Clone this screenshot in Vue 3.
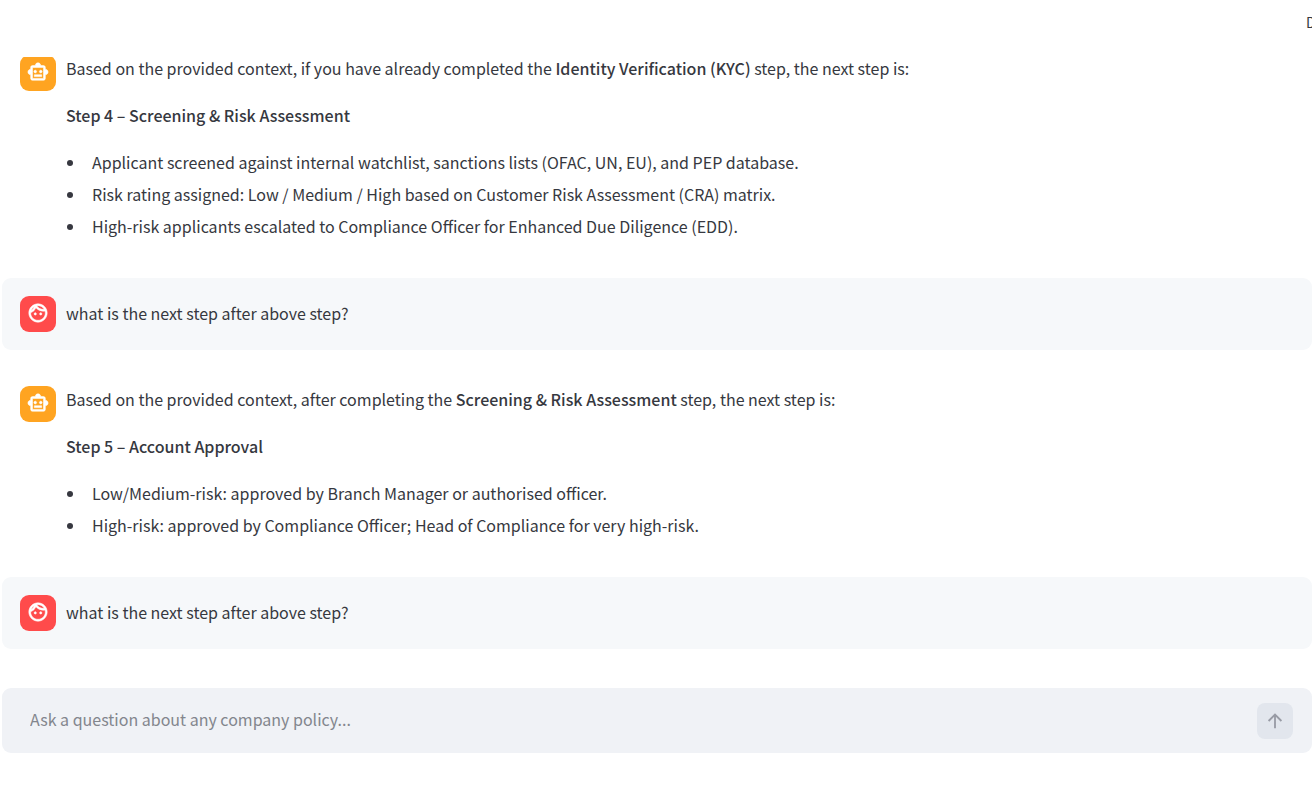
<script setup>
import { ref } from 'vue'

const question = ref('')

const messages = [
  {
    role: 'assistant',
    before: 'Based on the provided context, if you have already completed the ',
    strong: 'Identity Verification (KYC)',
    after: ' step, the next step is:',
    step: 'Step 4 – Screening & Risk Assessment',
    items: [
      'Applicant screened against internal watchlist, sanctions lists (OFAC, UN, EU), and PEP database.',
      'Risk rating assigned: Low / Medium / High based on Customer Risk Assessment (CRA) matrix.',
      'High-risk applicants escalated to Compliance Officer for Enhanced Due Diligence (EDD).',
    ],
  },
  { role: 'user', text: 'what is the next step after above step?' },
  {
    role: 'assistant',
    before: 'Based on the provided context, after completing the ',
    strong: 'Screening & Risk Assessment',
    after: ' step, the next step is:',
    step: 'Step 5 – Account Approval',
    items: [
      'Low/Medium-risk: approved by Branch Manager or authorised officer.',
      'High-risk: approved by Compliance Officer; Head of Compliance for very high-risk.',
    ],
  },
  { role: 'user', text: 'what is the next step after above step?' },
]
</script>

<template>
  <div class="app">
    <header class="toolbar">
      <button type="button" class="deploy">Deploy</button>
    </header>

    <main class="chat">
      <article v-for="(m, i) in messages" :key="i" class="message" :class="m.role">
        <div class="avatar">
          <svg v-if="m.role === 'assistant'" viewBox="0 0 24 24" aria-hidden="true">
            <path d="M20 9V7c0-1.1-.9-2-2-2h-3c0-1.66-1.34-3-3-3S9 3.34 9 5H6c-1.1 0-2 .9-2 2v2c-1.66 0-3 1.34-3 3s1.34 3 3 3v4c0 1.1.9 2 2 2h12c1.1 0 2-.9 2-2v-4c1.66 0 3-1.34 3-3s-1.34-3-3-3zm-2 10H6V7h12v12zm-9-6c-.83 0-1.5-.67-1.5-1.5S8.17 10 9 10s1.5.67 1.5 1.5S9.83 13 9 13zm7.5-1.5c0 .83-.67 1.5-1.5 1.5s-1.5-.67-1.5-1.5.67-1.5 1.5-1.5 1.5.67 1.5 1.5zM8 15h8v2H8v-2z" />
          </svg>
          <svg v-else viewBox="0 0 24 24" aria-hidden="true">
            <path d="M10.25 13c0 .69-.56 1.25-1.25 1.25S7.75 13.69 7.75 13s.56-1.25 1.25-1.25 1.25.56 1.25 1.25zM15 11.75c-.69 0-1.25.56-1.25 1.25s.56 1.25 1.25 1.25 1.25-.56 1.25-1.25-.56-1.25-1.25-1.25zm7 .25c0 5.52-4.48 10-10 10S2 17.52 2 12 6.48 2 12 2s10 4.48 10 10zM10.66 4.12C12.06 6.44 14.6 8 17.5 8c.46 0 .91-.05 1.34-.12C17.44 5.56 14.9 4 12 4c-.46 0-.91.05-1.34.12zM4.42 9.47a8.046 8.046 0 0 0 3.66-4.44 8.046 8.046 0 0 0-3.66 4.44zM20 12c0-.78-.12-1.53-.33-2.24-.7.15-1.42.24-2.17.24a10 10 0 0 1-7.76-3.69A10.016 10.016 0 0 1 4 11.86c.01.04 0 .09 0 .14 0 4.41 3.59 8 8 8s8-3.59 8-8z" />
          </svg>
        </div>
        <div class="body">
          <p v-if="m.text">{{ m.text }}</p>
          <template v-else>
            <p>{{ m.before }}<strong>{{ m.strong }}</strong>{{ m.after }}</p>
            <p><strong>{{ m.step }}</strong></p>
            <ul>
              <li v-for="item in m.items" :key="item">{{ item }}</li>
            </ul>
          </template>
        </div>
      </article>
    </main>

    <form class="composer" @submit.prevent>
      <input v-model="question" type="text" aria-label="Ask a question" placeholder="Ask a question about any company policy..." />
      <button type="submit" class="send" aria-label="Send" disabled>
        <svg viewBox="0 0 24 24" aria-hidden="true">
          <path d="M12 20V5M5 12l7-7 7 7" />
        </svg>
      </button>
    </form>
  </div>
</template>

<style>
body {
  margin: 0;
  background: #fff;
}
</style>

<style scoped>
.app {
  font-family: "Noto Sans CJK SC", "Open Sans", sans-serif;
  font-size: 16px;
  line-height: 26px;
  color: #363840;
  padding-left: 2px;
}
.toolbar {
  position: sticky;
  top: 0;
  z-index: 1;
  display: flex;
  justify-content: flex-end;
  align-items: flex-start;
  height: 57px;
  box-sizing: border-box;
  padding-top: 8px;
  background: #fff;
}
.deploy {
  width: 6px;
  height: 28px;
  padding: 0;
  border: 0;
  overflow: hidden;
  background: none;
  color: inherit;
  font: inherit;
  font-size: 14px;
  text-align: left;
}
.chat {
  display: flex;
  flex-direction: column;
  gap: 18px;
  margin-top: -20px;
}
.message {
  display: flex;
  gap: 10px;
  padding: 18px;
  border-radius: 9px;
}
.assistant {
  padding-bottom: 21px;
}
.user {
  background: #f6f8fa;
}
.avatar {
  display: flex;
  flex: none;
  align-items: center;
  justify-content: center;
  box-sizing: border-box;
  width: 36px;
  height: 36px;
  padding-bottom: 2px;
  border-radius: 9px;
}
.assistant .avatar {
  background: #ffa421;
}
.user .avatar {
  background: #ff4b4b;
}
.avatar svg {
  width: 22px;
  height: 22px;
  fill: #fff;
  stroke: #fff;
  stroke-width: 0.6;
}
.user .body {
  align-self: center;
  padding-bottom: 2px;
}
p,
ul {
  margin: 0;
}
p + p,
p + ul {
  margin-top: 21px;
}
strong {
  font-weight: 500;
}
ul {
  padding: 0;
  list-style: none;
}
li {
  display: flex;
}
li::before {
  content: "";
  flex: none;
  width: 6px;
  height: 6px;
  margin: 11px 19px 0 1px;
  border-radius: 50%;
  background: currentColor;
}
li + li {
  margin-top: 6px;
}
.composer {
  display: flex;
  align-items: center;
  gap: 18px;
  margin-top: 39px;
  padding: 15px 19px 14px 28px;
  border-radius: 9px;
  background: #f0f2f6;
}
.composer input {
  flex: 1;
  min-width: 0;
  padding: 0 0 4px;
  border: 0;
  outline: 0;
  background: none;
  color: inherit;
  font: inherit;
}
.composer input::placeholder {
  color: #83868d;
  opacity: 1;
}
.send {
  display: flex;
  align-items: center;
  justify-content: center;
  width: 36px;
  height: 36px;
  padding: 0;
  border: 0;
  border-radius: 8px;
  background: #e2e6ed;
}
.send svg {
  width: 22px;
  height: 22px;
  fill: none;
  stroke: #989ba5;
  stroke-width: 2;
}
</style>
